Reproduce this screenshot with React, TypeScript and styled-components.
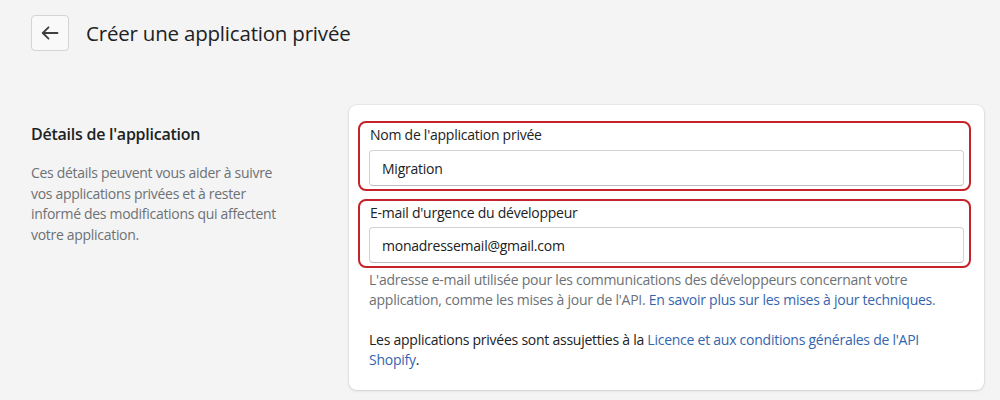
import React from "react";
import styled, { createGlobalStyle } from "styled-components";

const Global = createGlobalStyle`
  html, body { margin: 0; padding: 0; background: #f4f4f4; }
  body { font-family: "Open Sans", "Noto Sans", sans-serif; color: #202223; }
  * { box-sizing: border-box; }
`;

const Page = styled.div`
  width: 1000px;
  height: 400px;
  overflow: hidden;
  padding: 15px 16px 0 31px;
  display: flex;
  flex-direction: column;
`;

const Header = styled.header`
  display: flex;
  align-items: center;
  gap: 17px;
  height: 36px;
`;

const BackButton = styled.button`
  width: 38px;
  height: 36px;
  border: 1px solid #d3d4d6;
  border-radius: 4px;
  background: #f9f9f9;
  display: flex;
  align-items: center;
  justify-content: center;
  padding: 0;
  color: #3d3f42;
`;

const Title = styled.h1`
  margin: 0;
  font-size: 20.5px;
  font-weight: 500;
  letter-spacing: -0.2px;
  color: #202223;
`;

const Layout = styled.div`
  margin-top: 54px;
  display: grid;
  grid-template-columns: 260px 1fr;
  column-gap: 58px;
`;

const Aside = styled.div`
  padding-top: 19px;
`;

const AsideTitle = styled.h2`
  margin: 0;
  font-size: 16px;
  font-weight: 600;
  letter-spacing: -0.25px;
  line-height: 20px;
`;

const AsideText = styled.p`
  margin: 19px 0 0;
  font-size: 14px;
  line-height: 20.5px;
  color: #6d7175;
  letter-spacing: -0.3px;
`;

const Card = styled.section`
  background: #fff;
  border-radius: 8px;
  box-shadow: 0 0 0 1px rgba(63, 63, 68, 0.05), 0 1px 3px rgba(63, 63, 68, 0.15);
  padding: 16px 20px 20px;
`;

const Annotated = styled.div<{ $gap: number }>`
  border: 2px solid #c4232b;
  border-radius: 8px;
  margin: 0 -7px 0 -11px;
  padding: 2px 5px 3px 9px;
  display: flex;
  flex-direction: column;
  gap: ${(p) => p.$gap}px;
  & + & { margin-top: 8px; }
`;

const Label = styled.label`
  font-size: 14px;
  line-height: 20px;
  letter-spacing: -0.25px;
  color: #202223;
  padding-left: 1px;
`;

const Input = styled.div`
  height: 36px;
  border: 1px solid #cfd2d4;
  border-bottom-color: #b9bdc1;
  border-radius: 4px;
  display: flex;
  align-items: center;
  padding: 0 12px;
  font-size: 14px;
  letter-spacing: -0.25px;
  color: #202223;
`;

const Help = styled.p<{ $top: number; $muted?: boolean }>`
  margin: ${(p) => p.$top}px 0 0;
  font-size: 14px;
  line-height: 20px;
  letter-spacing: -0.25px;
  color: ${(p) => (p.$muted ? "#6d7175" : "#202223")};
`;

const Link = styled.a`
  color: #3465ae;
  text-decoration: none;
`;

const ArrowLeft = () => (
  <svg width="18" height="16" viewBox="0 0 18 16" fill="none" stroke="currentColor" strokeWidth="1.8" strokeLinecap="round" strokeLinejoin="round" aria-hidden>
    <path d="M16.5 8H1.8" />
    <path d="M7.5 2.3 1.8 8l5.7 5.7" />
  </svg>
);

export default function App() {
  return (
    <>
      <Global />
      <Page>
        <Header>
          <BackButton aria-label="Retour">
            <ArrowLeft />
          </BackButton>
          <Title>Créer une application privée</Title>
        </Header>
        <Layout>
          <Aside>
            <AsideTitle>Détails de l'application</AsideTitle>
            <AsideText>
              Ces détails peuvent vous aider à suivre vos applications privées et à rester
              informé des modifications qui affectent votre application.
            </AsideText>
          </Aside>
          <Card>
            <Annotated $gap={5}>
              <Label>Nom de l'application privée</Label>
              <Input>Migration</Input>
            </Annotated>
            <Annotated $gap={4}>
              <Label>E-mail d'urgence du développeur</Label>
              <Input>monadressemail@gmail.com</Input>
            </Annotated>
            <Help $top={2} $muted>
              L'adresse e-mail utilisée pour les communications des développeurs concernant votre
              application, comme les mises à jour de l'API.{" "}
              <Link href="#">En savoir plus sur les mises à jour techniques</Link>.
            </Help>
            <Help $top={20}>
              Les applications privées sont assujetties à la{" "}
              <Link href="#">Licence et aux conditions générales de l'API Shopify</Link>.
            </Help>
          </Card>
        </Layout>
      </Page>
    </>
  );
}
